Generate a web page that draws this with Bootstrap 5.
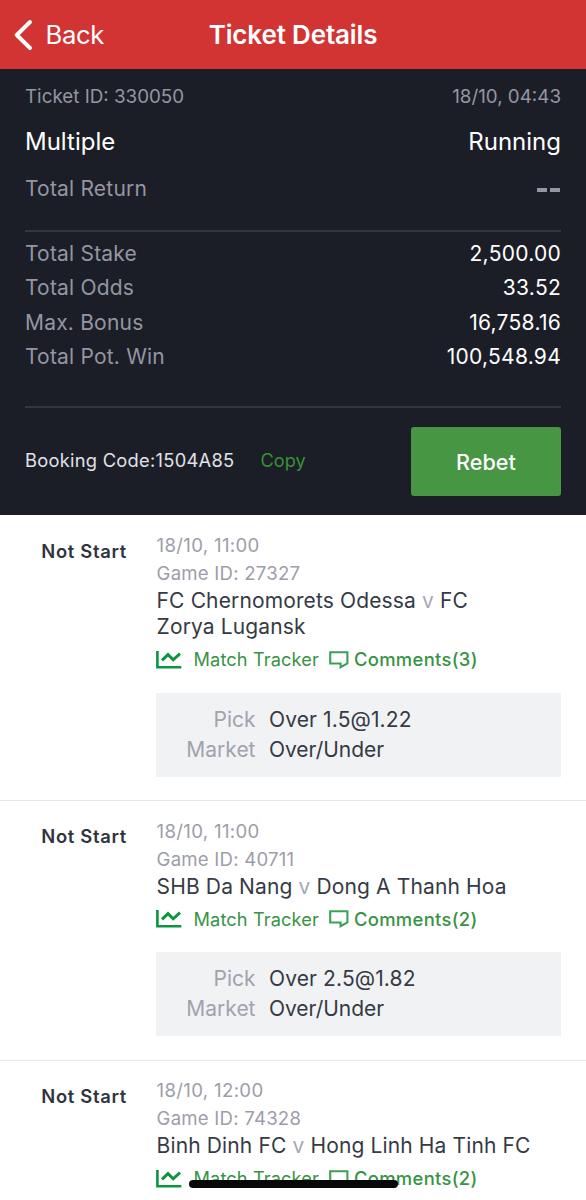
<!DOCTYPE html>
<html lang="en">
<head>
<meta charset="utf-8">
<meta name="viewport" content="width=device-width, initial-scale=1">
<title>Ticket Details</title>
<link href="https://cdn.jsdelivr.net/npm/bootstrap@5.3.0/dist/css/bootstrap.min.css" rel="stylesheet">
<style>
body{font-family:Inter,"Liberation Sans",sans-serif;color:#353a45;background:#fff;height:1200px;overflow:hidden}
.topbar{height:69px;background:#d23434;padding:0 14px}
.back-link{font-size:25.7px;letter-spacing:-.35px;line-height:1;gap:12.5px}
.page-title{font-size:26px;letter-spacing:-.15px;line-height:1}
.summary{height:446px;background:#1c1e27;padding:0 25px}
.muted{color:#9496a1}
.meta-row{height:28px;margin-top:14px;font-size:18.8px}
.type-row{height:36px;margin-top:13px;font-size:24px}
.fig-row{height:34.4px;font-size:21px;letter-spacing:.2px;line-height:34.4px}
.return-row{margin-top:11.5px}
.figure-value{letter-spacing:.27px}
.rule{height:2px;background:#34353e}
.rule-first{margin-top:24.1px}
.rule-last{margin-top:31.4px}
.figures{padding-top:5px}
.booking-row{margin-top:19px}
.booking-code,.copy-link{position:relative;top:-1px}
.booking-code{font-size:18.3px;letter-spacing:.28px;color:#e1e2e8}
.copy-link{font-size:18.2px;letter-spacing:.05px;color:#389038;margin-left:26px}
.rebet{width:150px;height:69px;background:#469644;border-radius:3px;border:0;font-size:21.6px;letter-spacing:.05px;padding-top:2px}
.dashes{margin:3px 1.5px 0 0;gap:3.5px}
.dash{width:9.5px;height:4px;background:#9496a1}
.matches{padding-top:.8px}
.match{padding:15.3px 25px 23.7px 0;border-bottom:1px solid #e6e7ed}
.state{width:156px;padding:5.7px 0 0 41.3px;font-size:18.4px;letter-spacing:.68px;line-height:28px;color:#30343f}
.info{font-size:18.6px;letter-spacing:.22px;line-height:28px;color:#9c9ea9;padding-left:.6px}
.info-date{letter-spacing:.33px}
.teams{font-size:21px;letter-spacing:.13px;line-height:26px;padding:1px 0 0 .6px}
.teams span{color:#a5a8b2}
.actions{height:39px;font-size:18.2px;color:#389344;line-height:1}
.tracker{letter-spacing:.12px;margin-left:11.5px}
.bubble-icon{margin-left:10px}
.comments{letter-spacing:.33px;font-size:18.4px;margin-left:5px}
.pick-box{background:#f1f2f4;margin-top:13.5px;padding:12px 0;font-size:21px;letter-spacing:.12px;line-height:30px}
.pick-label{width:99.5px;margin-right:13.5px;color:#a0a3ad;letter-spacing:0}
.market-name{letter-spacing:-.05px}
.home-bar{width:209px;height:8px;left:189px;top:1180px;background:#080808;border-radius:4px}
</style>
<script src="https://cdn.jsdelivr.net/npm/bootstrap@5.3.0/dist/js/bootstrap.bundle.min.js"></script>
</head>
<body class="position-relative">
<svg width="0" height="0" class="position-absolute">
<symbol id="chart" viewBox="0 0 26 18"><path d="M1.4 0V16.2H25.3" fill="none" stroke="#0c9440" stroke-width="2.6"/><path d="M6 9.4L12 3.6L17.2 8.8L24 2.6" fill="none" stroke="#0c9440" stroke-width="2.9"/></symbol>
<symbol id="bubble" viewBox="0 0 20 18"><path d="M1.2 1.3H18.4V12.5L11.6 16.2V12.5H1.2Z" fill="none" stroke="#3ba157" stroke-width="2.1"/></symbol>
</svg>
<header class="topbar navbar flex-nowrap position-relative text-white">
<a href="#" class="back-link d-flex align-items-center text-white text-decoration-none"><svg width="19" height="30" viewBox="0 0 19 30"><path d="M16 2L2.8 15L16 28" fill="none" stroke="#fff" stroke-width="3.9" stroke-linecap="round" stroke-linejoin="round"/></svg><span>Back</span></a>
<h1 class="page-title fw-semibold m-0 position-absolute start-50 top-50 translate-middle text-nowrap">Ticket Details</h1>
</header>
<section class="summary d-flex flex-column">
<div class="meta-row muted d-flex justify-content-between align-items-center"><span>Ticket ID: 330050</span><span>18/10, 04:43</span></div>
<div class="type-row text-white d-flex justify-content-between align-items-center"><span>Multiple</span><span>Running</span></div>
<div class="fig-row return-row d-flex justify-content-between align-items-center"><span class="muted">Total Return</span><span class="dashes d-flex" role="img" aria-label="--"><i class="dash"></i><i class="dash"></i></span></div>
<div class="rule rule-first"></div>
<div class="figures">
<div class="fig-row d-flex justify-content-between"><span class="muted">Total Stake</span><span class="figure-value text-white">2,500.00</span></div>
<div class="fig-row d-flex justify-content-between"><span class="muted">Total Odds</span><span class="figure-value text-white">33.52</span></div>
<div class="fig-row d-flex justify-content-between"><span class="muted">Max. Bonus</span><span class="figure-value text-white">16,758.16</span></div>
<div class="fig-row d-flex justify-content-between"><span class="muted">Total Pot. Win</span><span class="figure-value text-white">100,548.94</span></div>
</div>
<div class="rule rule-last"></div>
<div class="booking-row d-flex align-items-center"><span class="booking-code">Booking Code:1504A85</span><a href="#" class="copy-link text-decoration-none">Copy</a><button class="rebet ms-auto text-white fw-medium">Rebet</button></div>
</section>
<main class="matches">
<article class="match d-flex">
<div class="state fw-semibold flex-shrink-0 text-nowrap">Not Start</div>
<div class="flex-grow-1">
<div class="info info-date">18/10, 11:00</div><div class="info">Game ID: 27327</div>
<div class="teams">FC Chernomorets Odessa <span>v</span> FC<br>Zorya Lugansk</div>
<div class="actions d-flex align-items-center"><svg width="26" height="18"><use href="#chart"/></svg><span class="tracker">Match Tracker</span><svg class="bubble-icon" width="20" height="18"><use href="#bubble"/></svg><span class="comments fw-medium">Comments(3)</span></div>
<div class="pick-box"><div class="d-flex"><span class="pick-label text-end">Pick</span><span>Over 1.5@1.22</span></div><div class="d-flex"><span class="pick-label text-end">Market</span><span class="market-name">Over/Under</span></div></div>
</div>
</article>
<article class="match d-flex">
<div class="state fw-semibold flex-shrink-0 text-nowrap">Not Start</div>
<div class="flex-grow-1">
<div class="info info-date">18/10, 11:00</div><div class="info">Game ID: 40711</div>
<div class="teams">SHB Da Nang <span>v</span> Dong A Thanh Hoa</div>
<div class="actions d-flex align-items-center"><svg width="26" height="18"><use href="#chart"/></svg><span class="tracker">Match Tracker</span><svg class="bubble-icon" width="20" height="18"><use href="#bubble"/></svg><span class="comments fw-medium">Comments(2)</span></div>
<div class="pick-box"><div class="d-flex"><span class="pick-label text-end">Pick</span><span>Over 2.5@1.82</span></div><div class="d-flex"><span class="pick-label text-end">Market</span><span class="market-name">Over/Under</span></div></div>
</div>
</article>
<article class="match d-flex">
<div class="state fw-semibold flex-shrink-0 text-nowrap">Not Start</div>
<div class="flex-grow-1">
<div class="info info-date">18/10, 12:00</div><div class="info">Game ID: 74328</div>
<div class="teams">Binh Dinh FC <span>v</span> Hong Linh Ha Tinh FC</div>
<div class="actions d-flex align-items-center"><svg width="26" height="18"><use href="#chart"/></svg><span class="tracker">Match Tracker</span><svg class="bubble-icon" width="20" height="18"><use href="#bubble"/></svg><span class="comments fw-medium">Comments(2)</span></div>
</div>
</article>
</main>
<div class="home-bar position-absolute"></div>
</body>
</html>
